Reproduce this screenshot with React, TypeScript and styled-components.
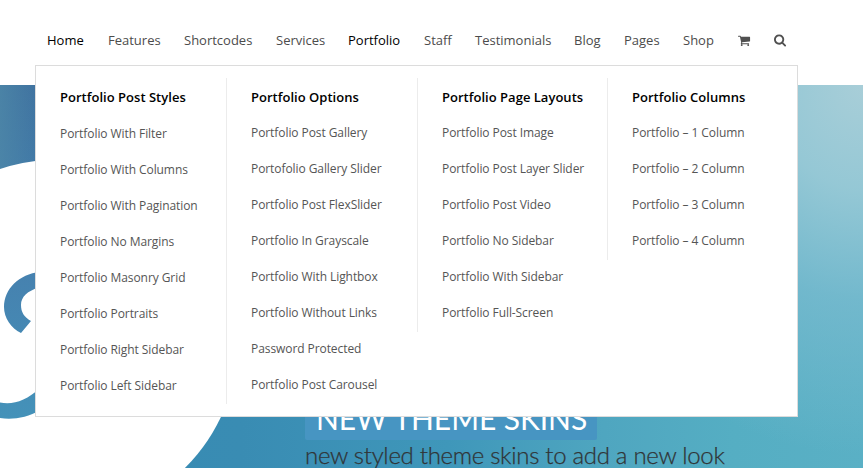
import React from "react";
import styled, { createGlobalStyle } from "styled-components";

const GlobalStyle = createGlobalStyle`
  * { box-sizing: border-box; }
  body { margin: 0; background: #fff; font-family: "Open Sans", sans-serif; }
`;

const Page = styled.div`
  position: relative;
  width: 863px;
  height: 468px;
  overflow: hidden;
  background: #fff;
`;

const Header = styled.header`
  height: 85px;
  padding: 28px 0 0 47px;
`;

const Nav = styled.nav`
  display: flex;
  align-items: center;
  height: 24px;
`;

const NavLink = styled.a<{ $width: number; $active?: boolean }>`
  flex: 0 0 ${(p) => p.$width}px;
  display: flex;
  align-items: center;
  height: 24px;
  font-size: 13px;
  line-height: 24px;
  white-space: nowrap;
  color: ${(p) => (p.$active ? "#000" : "#4c4c4c")};
`;

const NavIcon = styled.svg`
  display: block;
  width: 13px;
  height: 13px;
  fill: #505050;
`;

const Hero = styled.section`
  position: relative;
  height: 383px;
  overflow: hidden;
  background:
    radial-gradient(ellipse 330px 370px at 100% 0%, #a8ced8 0%, rgba(152, 201, 214, 0.95) 28%, rgba(127, 189, 209, 0.65) 58%, rgba(100, 177, 202, 0) 100%),
    linear-gradient(90deg, rgba(78, 136, 168, 0.75) 0px, rgba(64, 115, 160, 0) 35px) 0 0 / 36px 90px no-repeat,
    linear-gradient(180deg, rgba(64, 115, 160, 1) 0%, rgba(70, 130, 176, 0.85) 50%, rgba(54, 139, 179, 0) 85%) 0 0 / 200px 100% no-repeat,
    linear-gradient(90deg, #368ab3 0%, #398cb3 28%, #3f97ba 52%, #4fa6c0 70%, #55aec3 85%, #5ab0c5 100%);
`;

const Artwork = styled.svg`
  position: absolute;
  left: 0;
  top: 0;
`;

const Caption = styled.div`
  position: absolute;
  left: 305px;
  top: 307px;
  display: flex;
  flex-direction: column;
  align-items: flex-start;
  font-family: Lato, sans-serif;
  white-space: nowrap;
`;

const CaptionTitle = styled.h2`
  margin: 0;
  width: 292px;
  height: 48px;
  padding-left: 11px;
  border-radius: 2px;
  background: #4795c2;
  color: #fff;
  font-size: 30px;
  font-weight: 400;
  line-height: 52px;
  letter-spacing: -0.07px;
`;

const CaptionText = styled.p`
  margin: 0;
  color: #303436;
  font-size: 24px;
  font-weight: 300;
  line-height: 30px;
  letter-spacing: -0.3px;
  -webkit-text-stroke: 0.25px #303436;
`;

const MegaMenu = styled.div`
  position: absolute;
  left: 35px;
  top: 65px;
  width: 763px;
  height: 352px;
  display: grid;
  grid-template-columns: 190px 191px 190px 190px;
  align-items: start;
  padding-top: 12px;
  border: 1px solid #dcdcdc;
  background: #fff;
`;

const MenuColumn = styled.div<{ $divided?: boolean }>`
  display: flex;
  flex-direction: column;
  padding-left: 24px;
  padding-bottom: ${(p) => (p.$divided ? 1 : 0)}px;
  border-left: ${(p) => (p.$divided ? "1px solid #ececec" : "none")};
`;

const MenuTitle = styled.h3<{ $height: number }>`
  margin: 0;
  height: ${(p) => p.$height}px;
  color: #000;
  font-size: 13px;
  font-weight: 600;
  line-height: 38px;
  letter-spacing: 0.02px;
  white-space: nowrap;
`;

const MenuLink = styled.a`
  height: 36px;
  color: #555;
  font-size: 12px;
  line-height: 36px;
  letter-spacing: -0.075px;
  white-space: nowrap;
`;

const navItems = [
  { label: "Home", width: 61, active: true },
  { label: "Features", width: 76 },
  { label: "Shortcodes", width: 92 },
  { label: "Services", width: 72 },
  { label: "Portfolio", width: 76, active: true },
  { label: "Staff", width: 51 },
  { label: "Testimonials", width: 99 },
  { label: "Blog", width: 50 },
  { label: "Pages", width: 59 },
  { label: "Shop", width: 55 },
];

const columns = [
  {
    title: "Portfolio Post Styles",
    links: ["Portfolio With Filter", "Portfolio With Columns", "Portfolio With Pagination", "Portfolio No Margins", "Portfolio Masonry Grid", "Portfolio Portraits", "Portfolio Right Sidebar", "Portfolio Left Sidebar"],
  },
  {
    title: "Portfolio Options",
    links: ["Portfolio Post Gallery", "Portofolio Gallery Slider", "Portfolio Post FlexSlider", "Portfolio In Grayscale", "Portfolio With Lightbox", "Portfolio Without Links", "Password Protected", "Portfolio Post Carousel"],
  },
  {
    title: "Portfolio Page Layouts",
    links: ["Portfolio Post Image", "Portfolio Post Layer Slider", "Portfolio Post Video", "Portfolio No Sidebar", "Portfolio With Sidebar", "Portfolio Full-Screen"],
  },
  {
    title: "Portfolio Columns",
    links: ["Portfolio – 1 Column", "Portfolio – 2 Column", "Portfolio – 3 Column", "Portfolio – 4 Column"],
  },
];

const CartIcon = () => (
  <NavIcon viewBox="0 0 1792 1792">
    <path d="M640 1536q0 52-38 90t-90 38-90-38-38-90 38-90 90-38 90 38 38 90zm896 0q0 52-38 90t-90 38-90-38-38-90 38-90 90-38 90 38 38 90zm128-1088v512q0 24-16.500 42.500t-40.500 21.500l-1044 122q13 60 13 70 0 16-24 64h920q26 0 45 19t19 45-19 45-45 19h-1024q-26 0-45-19t-19-45q0-11 8-31.500t16-36 21.500-40 15.500-29.500l-177-823h-204q-26 0-45-19t-19-45 19-45 45-19h256q16 0 28.500 6.500t19.500 15.500 13 24.500 8 26 5.500 29.500 4.500 26h1201q26 0 45 19t19 45z" />
  </NavIcon>
);

const SearchIcon = () => (
  <NavIcon viewBox="64 64 1792 1792">
    <path d="M1216 832q0-185-131.500-316.500t-316.500-131.500-316.500 131.500-131.500 316.500 131.500 316.500 316.500 131.500 316.500-131.500 131.500-316.500zm512 832q0 52-38 90t-90 38q-54 0-90-38l-343-342q-179 124-399 124-143 0-273.500-55.500t-225-150-150-225-55.500-273.500 55.500-273.500 150-225 225-150 273.500-55.500 273.500 55.500 225 150 150 225 55.500 273.500q0 220-124 399l343 343q37 37 37 90z" />
  </NavIcon>
);

export default function App() {
  return (
    <Page>
      <GlobalStyle />
      <Header>
        <Nav>
          {navItems.map((item) => (
            <NavLink key={item.label} $width={item.width} $active={item.active}>
              {item.label}
            </NavLink>
          ))}
          <NavLink $width={36} aria-label="Cart">
            <CartIcon />
          </NavLink>
          <NavLink $width={13} aria-label="Search">
            <SearchIcon />
          </NavLink>
        </Nav>
      </Header>
      <Hero>
        <Artwork width="260" height="383" viewBox="0 85 260 383">
          <defs>
            <linearGradient id="mark" gradientUnits="userSpaceOnUse" x1="0" y1="270" x2="0" y2="420">
              <stop offset="0" stopColor="#4681af" />
              <stop offset="1" stopColor="#4492b9" />
            </linearGradient>
          </defs>
          <circle cx="57.8" cy="340" r="180.4" fill="#fff" />
          <path
            fill="url(#mark)"
            d="M40 272C19 274 4 289 4 307C4 318 11 328 21 333L31 321C24 317 21 312 21 305C21 297 27 291 40 287ZM0 402.500C13 405 26 401 40 388V410C27 418 12 420 0 418Z"
          />
        </Artwork>
        <Caption>
          <CaptionTitle>NEW THEME SKINS</CaptionTitle>
          <CaptionText>new styled theme skins to add a new look</CaptionText>
        </Caption>
      </Hero>
      <MegaMenu>
        {columns.map((column, index) => (
          <MenuColumn key={column.title} $divided={index > 0}>
            <MenuTitle $height={index === 0 ? 38 : 37}>{column.title}</MenuTitle>
            {column.links.map((link) => (
              <MenuLink key={link}>{link}</MenuLink>
            ))}
          </MenuColumn>
        ))}
      </MegaMenu>
    </Page>
  );
}
